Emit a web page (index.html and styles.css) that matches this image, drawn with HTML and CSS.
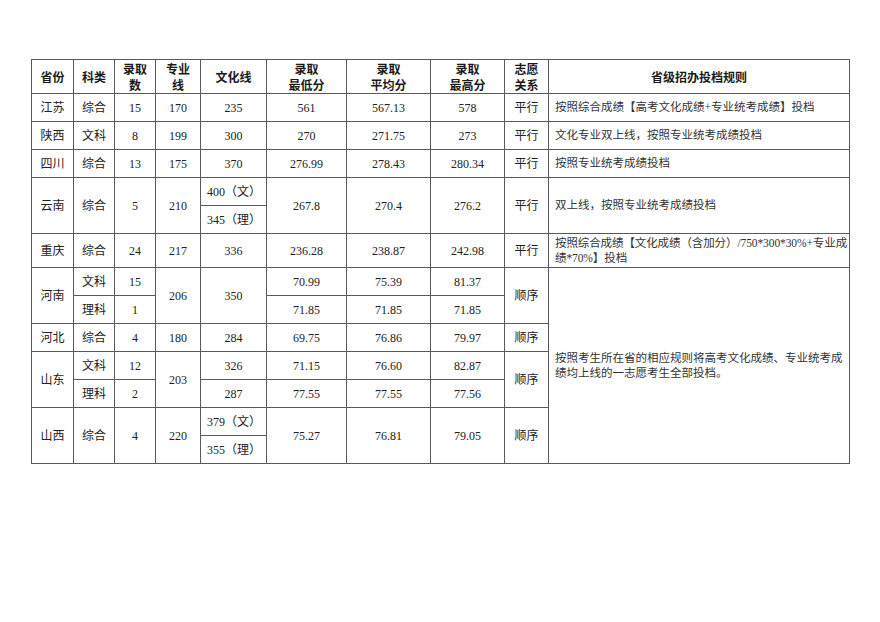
FILE: index.html
```html
<!DOCTYPE html>
<html lang="zh">
<head>
<meta charset="utf-8">
<title>录取分数</title>
<link rel="stylesheet" href="styles.css">
</head>
<body>
<div class="page">
<table class="score">
<colgroup>
<col class="c1"><col class="c2"><col class="c3"><col class="c4"><col class="c5"><col class="c6"><col class="c7"><col class="c8"><col class="c9"><col class="c10">
</colgroup>
<thead>
<tr class="tall">
<th>省份</th><th>科类</th><th>录取<br>数</th><th>专业<br>线</th><th>文化线</th><th>录取<br>最低分</th><th>录取<br>平均分</th><th>录取<br>最高分</th><th>志愿<br>关系</th><th>省级招办投档规则</th>
</tr>
</thead>
<tbody>
<tr class="r">
<td>江苏</td><td>综合</td><td>15</td><td>170</td><td>235</td><td>561</td><td>567.13</td><td>578</td><td>平行</td><td class="rule">按照综合成绩【高考文化成绩+专业统考成绩】投档</td>
</tr>
<tr class="r">
<td>陕西</td><td>文科</td><td>8</td><td>199</td><td>300</td><td>270</td><td>271.75</td><td>273</td><td>平行</td><td class="rule">文化专业双上线，按照专业统考成绩投档</td>
</tr>
<tr class="r">
<td>四川</td><td>综合</td><td>13</td><td>175</td><td>370</td><td>276.99</td><td>278.43</td><td>280.34</td><td>平行</td><td class="rule">按照专业统考成绩投档</td>
</tr>
<tr class="r">
<td rowspan="2">云南</td><td rowspan="2">综合</td><td rowspan="2">5</td><td rowspan="2">210</td><td class="sub">400（文）</td><td rowspan="2">267.8</td><td rowspan="2">270.4</td><td rowspan="2">276.2</td><td rowspan="2">平行</td><td rowspan="2" class="rule">双上线，按照专业统考成绩投档</td>
</tr>
<tr class="r">
<td class="sub">345（理）</td>
</tr>
<tr class="tall">
<td>重庆</td><td>综合</td><td>24</td><td>217</td><td>336</td><td>236.28</td><td>238.87</td><td>242.98</td><td>平行</td><td class="rule tight">按照综合成绩【文化成绩（含加分）/750*300*30%+专业成<br>绩*70%】投档</td>
</tr>
<tr class="r">
<td rowspan="2">河南</td><td>文科</td><td>15</td><td rowspan="2">206</td><td rowspan="2">350</td><td>70.99</td><td>75.39</td><td>81.37</td><td rowspan="2">顺序</td><td rowspan="7" class="rule">按照考生所在省的相应规则将高考文化成绩、专业统考成绩均上线的一志愿考生全部投档。</td>
</tr>
<tr class="r">
<td>理科</td><td>1</td><td>71.85</td><td>71.85</td><td>71.85</td>
</tr>
<tr class="r">
<td>河北</td><td>综合</td><td>4</td><td>180</td><td>284</td><td>69.75</td><td>76.86</td><td>79.97</td><td>顺序</td>
</tr>
<tr class="r">
<td rowspan="2">山东</td><td>文科</td><td>12</td><td rowspan="2">203</td><td>326</td><td>71.15</td><td>76.60</td><td>82.87</td><td rowspan="2">顺序</td>
</tr>
<tr class="r">
<td>理科</td><td>2</td><td>287</td><td>77.55</td><td>77.55</td><td>77.56</td>
</tr>
<tr class="r">
<td rowspan="2">山西</td><td rowspan="2">综合</td><td rowspan="2">4</td><td rowspan="2">220</td><td class="sub">379（文）</td><td rowspan="2">75.27</td><td rowspan="2">76.81</td><td rowspan="2">79.05</td><td rowspan="2">顺序</td>
</tr>
<tr class="r">
<td class="sub">355（理）</td>
</tr>
</tbody>
</table>
</div>
</body>
</html>
```

FILE: styles.css
```css
html, body {
  margin: 0;
  padding: 0;
  background: #ffffff;
}

.page {
  padding: 59px 0 0 31px;
}

.score {
  border-collapse: collapse;
  table-layout: fixed;
  width: 818px;
  font-family: "Liberation Serif", "Noto Sans CJK SC", serif;
  font-size: 12px;
  color: #222;
}

.c1 { width: 42px; }
.c2 { width: 41px; }
.c3 { width: 41px; }
.c4 { width: 45px; }
.c5 { width: 66px; }
.c6 { width: 80px; }
.c7 { width: 84px; }
.c8 { width: 74px; }
.c9 { width: 44px; }
.c10 { width: 301px; }

.score th,
.score td {
  border: 1px solid #5a5a5a;
  padding: 0;
  text-align: center;
  vertical-align: middle;
  line-height: 16px;
}

.score th {
  font-family: "Noto Sans CJK SC", sans-serif;
  font-weight: 700;
  font-size: 12px;
  color: #1a1a1a;
}

.score td {
  font-weight: 400;
}

.r { height: 28px; }
.tall { height: 34px; }

.score td.sub {
  text-align: left;
  padding-left: 6px;
}

.score td.rule {
  text-align: left;
  padding: 0 0 0 6px;
  font-size: 11.5px;
  line-height: 15px;
  color: #333;
}

.score td.tight {
  letter-spacing: -0.1px;
  white-space: nowrap;
}
```
